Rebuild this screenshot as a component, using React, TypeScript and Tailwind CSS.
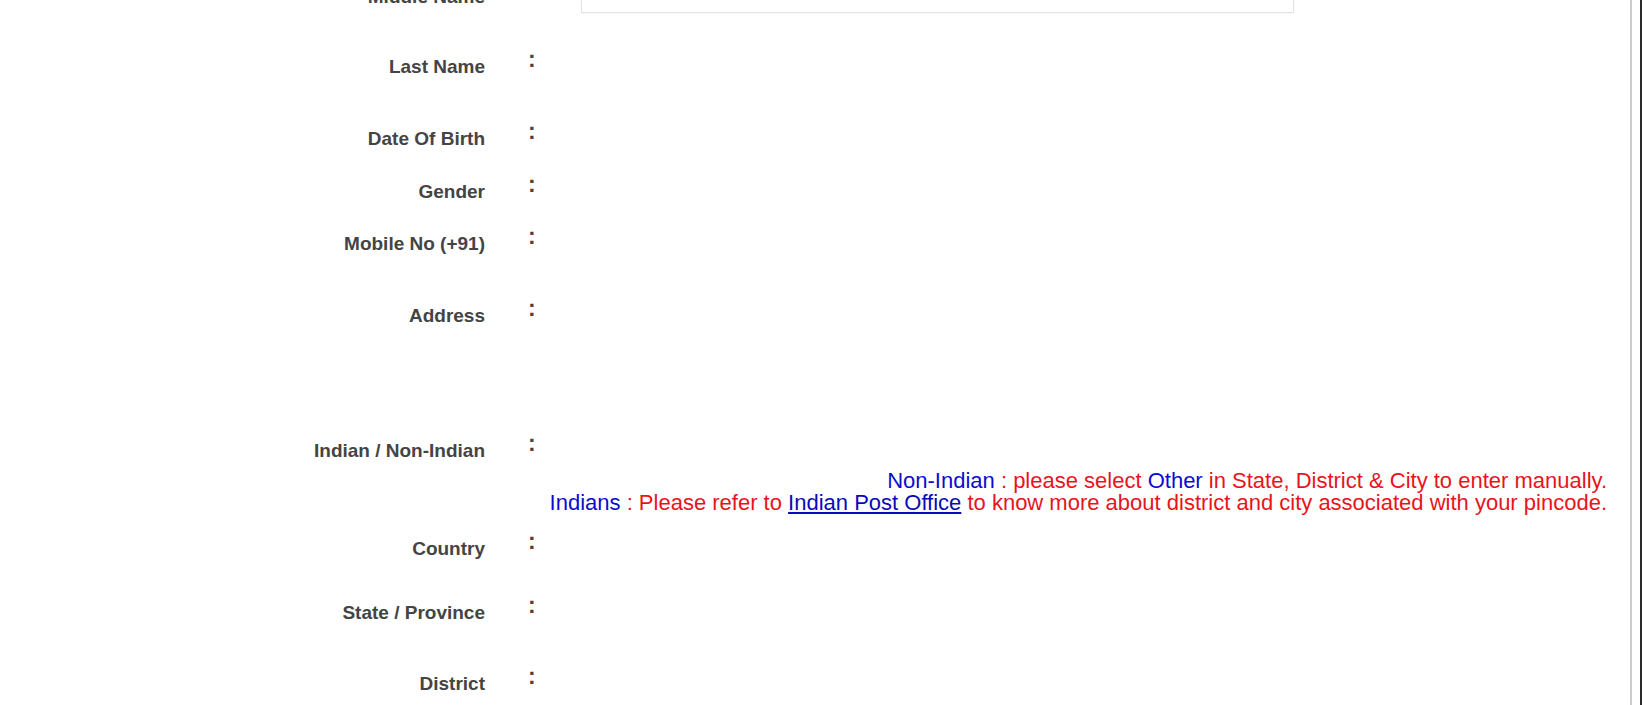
const labelCls = "w-[485px] shrink-0 pt-[8px] text-right text-[19px] leading-[22px] font-bold text-[#444]"
const colonCls = "w-[88px] shrink-0 pl-[43px] text-[23px] leading-[22px] font-bold text-[#444]"

type Row = { label: string; h: string }

const rows: Row[] = [
  { label: "Last Name", h: "h-[72px]" },
  { label: "Date Of Birth", h: "h-[53px]" },
  { label: "Gender", h: "h-[52px]" },
  { label: "Mobile No (+91)", h: "h-[72px]" },
  { label: "Address", h: "h-[135px]" },
]

const rowsAfter: Row[] = [
  { label: "Country", h: "h-[64px]" },
  { label: "State / Province", h: "h-[71px]" },
  { label: "District", h: "h-[60px]" },
]

function FieldRow({ label, h }: Row) {
  return (
    <div className={`flex items-start ${h}`}>
      <div className={labelCls}>{label}</div>
      <div className={colonCls}>:</div>
      <div className="flex-1" />
    </div>
  )
}

export default function App() {
  return (
    <div className="flex h-[705px] w-full overflow-hidden bg-white font-['Liberation_Sans',Arial,sans-serif]">
      <div className="flex-1">
        <div className="-mt-[23px]">
          {/* Middle Name (scrolled off) */}
          <div className="flex items-start h-[71px]">
            <div className={labelCls + " pt-[9px]"}>Middle Name</div>
            <div className={colonCls}>:</div>
            <div className="flex-1 pl-[8px]">
              <div className="h-[36px] w-[713px] border border-[#e3e3e3] bg-white shadow-[0_1px_2px_rgba(0,0,0,0.04)]" />
            </div>
          </div>

          {rows.map((r) => (
            <FieldRow key={r.label} {...r} />
          ))}

          {/* Indian / Non-Indian */}
          <div className="flex items-start h-[38px]">
            <div className={labelCls}>Indian / Non-Indian</div>
            <div className={colonCls}>:</div>
            <div className="flex-1" />
          </div>
          <div className="h-[60px] pr-[23px] text-right text-[22px] leading-[22px] text-[#e8141c]">
            <p>
              <span className="text-[#0c0cd0]">Non-Indian</span> : please select{" "}
              <span className="text-[#0c0cd0]">Other</span> in State, District &amp; City to enter manually.
            </p>
            <p>
              <span className="text-[#0c0cd0]">Indians</span> : Please refer to{" "}
              <a href="#" className="text-[#0a0ab8] underline">Indian Post Office</a> to know more about
              district and city associated with your pincode.
            </p>
          </div>

          {rowsAfter.map((r) => (
            <FieldRow key={r.label} {...r} />
          ))}
        </div>
      </div>
      <div className="w-[2px] shrink-0 bg-[#cdcdcd]" />
      <div className="w-[8px] shrink-0 bg-white" />
      <div className="w-[2px] shrink-0 bg-[#2a2a2a]" />
    </div>
  )
}
